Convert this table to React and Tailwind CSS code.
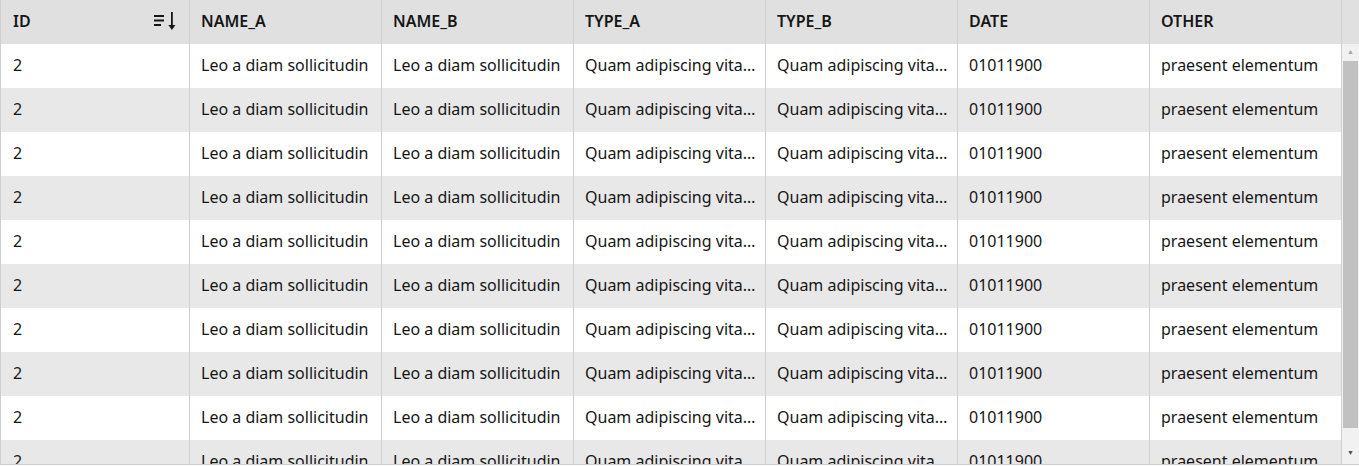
import React from 'react'

const COLS = ['NAME_A', 'NAME_B', 'TYPE_A', 'TYPE_B', 'DATE', 'OTHER']
const ROWS = Array.from({ length: 10 }, () => ({
  id: '2',
  nameA: 'Leo a diam sollicitudin',
  nameB: 'Leo a diam sollicitudin',
  typeA: 'Quam adipiscing vitae proin',
  typeB: 'Quam adipiscing vitae proin',
  date: '01011900',
  other: 'praesent elementum',
}))

function SortIcon() {
  return (
    <svg width="22" height="20" viewBox="0 0 22 20" fill="none">
      <rect x="0" y="4" width="10" height="2" fill="#161616" />
      <rect x="0" y="8.5" width="10" height="2" fill="#161616" />
      <rect x="0" y="13" width="7" height="2" fill="#161616" />
      <rect x="17" y="1" width="1.8" height="14" fill="#161616" />
      <path d="M14.4 14 L17.9 19 L21.4 14 Z" fill="#161616" />
    </svg>
  )
}

const base = 'h-[44px] pb-[3px] flex items-center border-r border-[#cfcfcf] overflow-hidden whitespace-nowrap'
const cell = `${base} w-[192px] pl-[11px] pr-2`
const idCell = `${base} w-[189px] pl-3`

export default function App() {
  return (
    <div className="w-[1359px] h-[465px] border-l border-b border-[#cfcfcf] flex flex-col overflow-hidden text-[#161616] text-[16px]" style={{ fontFamily: '"Noto Sans", "Open Sans", sans-serif' }}>
      <div className="flex bg-[#e0e0e0] font-semibold shrink-0">
        <div className={`${idCell} justify-between pr-[13px]`}>
          <span>ID</span>
          <SortIcon />
        </div>
        {COLS.map(c => (
          <div key={c} className={cell}>{c}</div>
        ))}
        <div className="flex-1 h-[44px]" />
      </div>
      <div className="flex flex-1 min-h-0">
        <div className="flex-1 overflow-hidden">
          {ROWS.map((r, i) => (
            <div key={i} className={`flex ${i % 2 ? 'bg-[#e8e8e8]' : 'bg-white'}`}>
              <div className={`${idCell} pr-2`}>{r.id}</div>
              <div className={cell}>{r.nameA}</div>
              <div className={cell}>{r.nameB}</div>
              <div className={cell}><span className="truncate">{r.typeA}</span></div>
              <div className={cell}><span className="truncate">{r.typeB}</span></div>
              <div className={cell}>{r.date}</div>
              <div className={cell}>{r.other}</div>
            </div>
          ))}
        </div>
        <div className="w-[17px] bg-[#f1f1f1] flex flex-col items-center">
          <div className="h-[16px] flex items-center justify-center text-[#a3a3a3] text-[7px]">▲</div>
          <div className="w-[15px] h-[367px] bg-[#c1c1c1] mt-[1px]" />
          <div className="flex-1" />
          <div className="h-[16px] flex items-center justify-center text-[#505050] text-[7px] mb-[3px]">▼</div>
        </div>
      </div>
    </div>
  )
}
